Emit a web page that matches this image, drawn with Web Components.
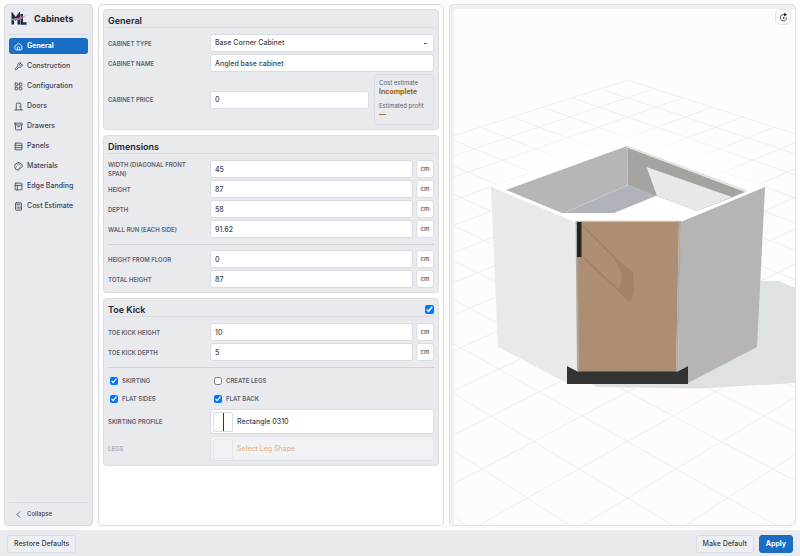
<!DOCTYPE html>
<html lang="en">
<head>
<meta charset="utf-8">
<meta name="viewport" content="width=device-width, initial-scale=1">
<title>Cabinets</title>
<style>
  :root {
    --surface: #e8eaee;
    --line: #d9dce2;
    --ink: #1d2430;
    --text: #3c4452;
    --muted: #5b6371;
    --accent: #196dc5;
    --field: #ffffff;
  }
  html, body { height: 100%; }
  body { margin: 0; background: #fdfdfe; color: var(--text); font: 500 7px/10px Inter, "Liberation Sans", sans-serif; }
</style>
</head>
<body>
<cabinet-app></cabinet-app>

<script>
const define = (name, css, html, setup) => {
  const template = document.createElement('template');
  template.innerHTML = `<style>*{box-sizing:border-box}[hidden]{display:none!important}${css}</style>${html}`;
  customElements.define(name, class extends HTMLElement {
    connectedCallback() {
      if (this.shadowRoot) return;
      const root = this.attachShadow({ mode: 'open' });
      root.append(template.content.cloneNode(true));
      if (setup) setup(this, root);
    }
  });
};

const ICONS = {
  home: '<path d="M3 10.5 12 3l9 7.5V19a2 2 0 0 1-2 2H5a2 2 0 0 1-2-2z"/><path d="M9 21v-7a1 1 0 0 1 1-1h4a1 1 0 0 1 1 1v7"/>',
  wrench: '<path d="M14.7 6.3a1 1 0 0 0 0 1.4l1.600 1.600a1 1 0 0 0 1.400 0l3.770-3.770a6 6 0 0 1-7.940 7.940l-6.910 6.910a2.120 2.120 0 0 1-3-3l6.910-6.910a6 6 0 0 1 7.940-7.940z"/>',
  grid: '<rect x="3" y="3" width="7" height="7" rx="1"/><rect x="14" y="3" width="7" height="7" rx="1"/><rect x="14" y="14" width="7" height="7" rx="1"/><rect x="3" y="14" width="7" height="7" rx="1"/>',
  door: '<path d="M6 21V5a2 2 0 0 1 2-2h8a2 2 0 0 1 2 2v16"/><path d="M2 21h20M14.5 12v.5"/>',
  archive: '<rect x="2" y="3" width="20" height="5" rx="1"/><path d="M4 8v11a2 2 0 0 0 2 2h12a2 2 0 0 0 2-2V8M9.5 12.5h5"/>',
  rows: '<rect x="3" y="3" width="18" height="18" rx="2"/><path d="M3 9h18M3 15h18"/>',
  palette: '<path d="M12 2a10 10 0 0 0 0 20c1 0 1.700-.8 1.700-1.700 0-.4-.2-.8-.4-1.100-.3-.3-.5-.7-.5-1.100a1.600 1.600 0 0 1 1.700-1.700h2c3 0 5.500-2.500 5.500-5.500C22 6 17.500 2 12 2z"/><path d="M13.5 6.5h.1M17.3 10.5h.1M8.5 7.5h.1M6.5 12.5h.1"/>',
  layout: '<rect x="3" y="3" width="18" height="18" rx="2"/><path d="M3 9h18M9 21V9"/>',
  calc: '<rect x="4" y="2" width="16" height="20" rx="2"/><path d="M8 6h8M16 14v4M8 10.5h.1M12 10.5h.1M16 10.5h.1M8 14.5h.1M12 14.5h.1M8 18h.1M12 18h.1"/>',
  left: '<path d="m15 5-7 7 7 7"/>',
  rotate: '<path d="M20.500 13a8.500 8.500 0 1 1-5-8.300"/><path d="M14.500 1.500v6.500l5-3.300z" fill="currentColor"/><circle cx="12" cy="13" r="1.200" fill="currentColor"/>'
};

define('ui-icon',
  `:host{display:block;width:9px;height:9px;flex:none}
   svg{display:block;width:100%;height:100%;fill:none;stroke:currentColor;stroke-width:2.2;stroke-linecap:round;stroke-linejoin:round}`,
  `<svg viewBox="0 0 24 24" aria-hidden="true"></svg>`,
  (host, root) => { root.querySelector('svg').innerHTML = ICONS[host.getAttribute('name')]; });

define('brand-logo',
  `:host{display:block;width:17px;height:14px;flex:none} svg{display:block;width:100%;height:100%}`,
  `<svg viewBox="0 0 34 28" role="img" aria-label="Logo">
    <g fill="none" stroke="#1c2a4d" stroke-width="5">
      <path d="M5.500 25V6l6 8 6-8v19"/><path d="M23.500 4v19H33"/>
    </g>
    <path d="M0 14C10 15 21 12 33 6 25 14 13 19 0 14z" fill="#e0364c" stroke="#e8eaee" stroke-width=".8"/>
  </svg>`);

define('nav-item',
  `:host{display:block}
   a{display:flex;align-items:center;gap:4px;height:16px;padding:0 5px;border-radius:3px;color:inherit;text-decoration:none;white-space:nowrap}
   a[aria-current]{background:var(--accent);color:#fff;font-weight:700}`,
  `<a href="#"><slot></slot></a>`,
  (host, root) => {
    const link = root.querySelector('a');
    const icon = document.createElement('ui-icon');
    icon.setAttribute('name', host.getAttribute('icon'));
    link.prepend(icon);
    if (host.hasAttribute('current')) link.setAttribute('aria-current', 'page');
  });

define('side-nav',
  `:host{display:flex;flex-direction:column;background:var(--surface);border:1px solid var(--line);border-radius:4px;padding:4px 4px 0}
   header{display:flex;align-items:center;gap:7px;height:26px;padding:0 1px 5px;border-bottom:1px solid var(--line);color:var(--ink)}
   h1{margin:0;font-size:9px;line-height:12px;font-weight:700}
   nav{display:flex;flex-direction:column;gap:4px;padding-top:3px;flex:1}
   button{display:flex;align-items:center;gap:4px;height:23px;padding:0 5px;border:0;border-top:1px solid var(--line);background:none;color:inherit;font:inherit;font-size:6px;text-align:left}`,
  `<header><brand-logo></brand-logo><h1>Cabinets</h1></header>
   <nav aria-label="Sections"><slot></slot></nav>
   <button type="button"><ui-icon name="left"></ui-icon>Collapse</button>`);

define('panel-card',
  `:host{display:block;background:var(--surface);border:1px solid var(--line);border-radius:4px;padding:4px}
   header{display:flex;align-items:center;justify-content:space-between;height:14px;border-bottom:1px solid var(--line);margin-bottom:6px}
   h2{margin:0;font-size:9px;line-height:12px;font-weight:600;color:var(--ink)}
   input{width:9px;height:9px;margin:0;accent-color:#0075ff}
   .body{display:grid;gap:2px}`,
  `<header><h2></h2><input type="checkbox" checked hidden></header><div class="body"><slot></slot></div>`,
  (host, root) => {
    root.querySelector('h2').textContent = host.getAttribute('heading');
    const box = root.querySelector('input');
    box.hidden = !host.hasAttribute('toggle');
    box.setAttribute('aria-label', 'Enable ' + host.getAttribute('heading'));
  });

define('rule-line', `:host{display:block;height:1px;margin:4px 0 3px;background:#cfd3da}`, ``);

const ROW_CSS = `
   :host{display:grid;grid-template-columns:98px minmax(0,1fr);gap:4px;align-items:center}
   label,.label{padding-right:6px;font-size:6px;line-height:9px;font-weight:600;text-transform:uppercase;color:var(--muted)}
   .control{display:flex;gap:3px;min-width:0}
   input,select,.unit{height:18px;border:1px solid var(--line);border-radius:3px;background-color:var(--field);color:var(--text);font:inherit;margin:0}
   input,select{flex:1;min-width:0;width:100%;padding:0 4px}`;

define('text-row',
  ROW_CSS + `.unit{width:18px;padding:0;flex:none;font-size:6px;font-weight:600;color:var(--muted);text-align:center}`,
  `<label for="field"></label>
   <div class="control"><input id="field" type="text"><button class="unit" type="button" hidden></button></div>`,
  (host, root) => {
    root.querySelector('label').textContent = host.getAttribute('label');
    root.querySelector('input').value = host.getAttribute('value');
    const unit = root.querySelector('button');
    unit.hidden = !host.hasAttribute('unit');
    unit.textContent = host.getAttribute('unit') || '';
  });

define('select-row',
  ROW_CSS + `select{appearance:none;background-image:linear-gradient(var(--muted),var(--muted));background-size:3px 1px;background-position:right 6px center;background-repeat:no-repeat}`,
  `<label for="field"></label><div class="control"><select id="field"><option></option></select></div>`,
  (host, root) => {
    root.querySelector('label').textContent = host.getAttribute('label');
    root.querySelector('option').textContent = host.getAttribute('value');
  });

define('price-row',
  ROW_CSS + `.control{align-items:center;gap:5px}`,
  `<label for="field"></label><div class="control"><input id="field" type="text"><slot></slot></div>`,
  (host, root) => {
    root.querySelector('label').textContent = host.getAttribute('label');
    root.querySelector('input').value = host.getAttribute('value');
  });

define('cost-summary',
  `:host{display:block;box-sizing:border-box;width:60px;flex:none;border:1px solid var(--line);border-radius:3px;padding:3px 4px 4px}
   dl{margin:0} dt{font-size:6px;line-height:9px;font-weight:400;color:var(--muted);white-space:nowrap}
   dd{margin:0;line-height:10px;font-weight:700;color:#946512}
   dd + dt{margin-top:4px}`,
  `<dl><dt>Cost estimate</dt><dd>Incomplete</dd><dt>Estimated profit</dt><dd>—</dd></dl>`);

define('check-pair',
  `:host{display:grid;grid-template-columns:98px minmax(0,1fr);gap:6px;padding-left:2px}`,
  `<slot></slot>`);

define('check-box',
  `:host{display:block}
   label{display:flex;align-items:center;gap:4px;height:16px;font-size:6px;font-weight:600;text-transform:uppercase;color:var(--muted)}
   input{width:8px;height:8px;margin:0;accent-color:#0075ff}`,
  `<label><input type="checkbox"><slot></slot></label>`,
  (host, root) => { root.querySelector('input').checked = host.hasAttribute('checked'); });

define('picker-row',
  ROW_CSS + `
   button{display:flex;align-items:center;gap:4px;width:100%;height:25px;padding:0 2px;border:1px solid var(--line);border-radius:3px;background:var(--field);color:var(--text);font:inherit;text-align:left}
   .thumb{display:flex;justify-content:center;align-items:center;width:20px;height:20px;border:1px solid var(--line);border-radius:2px}
   .thumb i{width:1px;height:18px;background:#333}
   :host([disabled]) .label{color:#a9adb5}
   :host([disabled]) button{background:#f0f2f5;border-color:#e1e4e9;color:#e3ba8c}
   :host([disabled]) .thumb{border-color:#e4e7eb}
   :host([disabled]) i{display:none}`,
  `<span class="label" id="name"></span>
   <button type="button" aria-labelledby="name value"><span class="thumb"><i></i></span><span id="value"></span></button>`,
  (host, root) => {
    root.querySelector('#name').textContent = host.getAttribute('label');
    root.querySelector('#value').textContent = host.getAttribute('value');
    root.querySelector('button').disabled = host.hasAttribute('disabled');
  });

define('scene-view',
  `:host{display:block;position:relative;overflow:hidden;background:#eff0f1;border:1px solid #dfe2e6;border-radius:4px;padding:4px 0 0 4px}
   svg.scene{display:block;width:100%;height:100%;background:#fcfcfc}
   button{position:absolute;top:4px;right:4px;display:grid;place-items:center;width:16px;height:16px;padding:0;border:1px solid #e0e2e6;border-radius:6px;background:#fff;color:#22262c}`,
  `<svg class="scene" viewBox="454 9 341 516" preserveAspectRatio="xMidYMid slice" role="img" aria-label="Cabinet preview">
     <defs>
       <radialGradient id="glow"><stop offset=".6" stop-color="#fefefe"/><stop offset="1" stop-color="#fefefe" stop-opacity="0"/></radialGradient>
       <linearGradient id="wood" x1="0" y1="0" x2="0" y2="1"><stop offset="0" stop-color="#ae8f76"/><stop offset="1" stop-color="#ae8d70"/></linearGradient>
       <filter id="grain" x="0" y="0" width="1" height="1">
         <feTurbulence type="fractalNoise" baseFrequency=".02 .3" numOctaves="3" seed="4"/>
         <feColorMatrix values="0 0 0 0 .4  0 0 0 0 .28  0 0 0 0 .2  .4 0 0 0 -.12"/>
         <feComposite in2="SourceGraphic" operator="in"/>
       </filter>
       <filter id="soft"><feGaussianBlur stdDeviation=".6"/></filter>
     </defs>
     <g id="floor" fill="none" stroke="#efeff0" stroke-width="1"></g>
     <ellipse cx="628" cy="192" rx="140" ry="74" fill="url(#glow)"/>
     <path d="M757 281h22l16 7v95l-95 5.500-103-1.500-8-4 90-6z" fill="#dfe2e2"/>
     <path d="M491 186 627 145 765 186 680 223H576z" fill="#fff"/>
     <path d="M627 146 506 190l56 23h6l60-28z" fill="#b6b6b6"/>
     <path d="M628 185 562 213h52l43-17.500z" fill="#b0b3b9"/>
     <path d="M628 185 566 212" stroke="#d2d4d6" stroke-width=".7"/>
     <path d="m627 147 118 45-12 5-36 14-40-15-29-11z" fill="#a5a3a0"/>
     <path d="m646.500 167 10.500 29 40 15 35-14z" fill="#e8e8e8"/>
     <path d="M627 146.500 746 191" stroke="#e4e2e0" stroke-width="2" fill="none"/>
     <path d="M627.500 148v37" stroke="#c3c3c2" stroke-width=".7"/>
     <path d="m491 187 84.500 35 2.500 149-11-5v17l-69-36z" fill="#e9e9e9"/>
     <path d="m765 187-84.500 35-2.500 149 10-5v17l69-36z" fill="#b5b5b5"/>
     <path d="M575.500 221h2l2 151-2.500-1z" fill="#a9abac"/>
     <path d="M679 221h2l-3 150-2 1z" fill="#a9abac"/>
     <path d="M577 221h102l-3 151h-97z" fill="url(#wood)"/>
     <path d="M577 221h102l-3 151h-97z" filter="url(#grain)"/>
     <path d="M577 221.300h102" stroke="#dcb796" stroke-width="1.200"/>
     <g filter="url(#soft)" opacity=".2">
       <path d="m583 226 33 33M584 258l46 43" fill="none" stroke="#6f5846" stroke-width="2"/>
       <path d="m614 257 19 15 1 18-3 12-12-13 3-14z" fill="#6f5846"/>
     </g>
     <path d="M577 222h4.500v35H577z" fill="#24221d"/>
     <path d="m567 366 10.500 5.500h100L688 366v18H567z" fill="#333"/>
   </svg>
   <button type="button" aria-label="Reset view"><ui-icon name="rotate"></ui-icon></button>`,
  (host, root) => {
    // Ground grid in one-point perspective: s is depth along the view axis, d the sideways offset.
    const point = (u, v) => {
      const s = u + v, d = u - v, h = 1 / (0.0012255 - 0.0000373 * s);
      return `${(627.5 + d * h * 0.05576).toFixed(1)} ${(h - 400).toFixed(1)}`;
    };
    let d = '';
    for (let k = -11.5; k <= 8.5; k++) {
      d += `M${point(k, -11.5)}L${point(k, 8.5)}M${point(-11.5, k)}L${point(8.5, k)}`;
    }
    const path = document.createElementNS('http://www.w3.org/2000/svg', 'path');
    path.setAttribute('d', d);
    root.querySelector('#floor').append(path);
  });

define('ui-button',
  `:host{display:block}
   button{display:block;height:18px;padding:0 6px;border:1px solid var(--line);border-radius:3px;background:#eceef1;color:inherit;font:inherit;white-space:nowrap}
   :host([primary]) button{background:var(--accent);border-color:var(--accent);color:#fff;font-weight:700}`,
  `<button type="button"><slot></slot></button>`);

define('action-bar',
  `:host{display:flex;align-items:center;gap:5px;height:27px;padding:0 7px;background:var(--surface)}
   ::slotted(:first-child){margin-right:auto}`,
  `<slot></slot>`);

define('cabinet-app',
  `:host{display:flex;flex-direction:column;min-height:100vh}
   main{flex:1;display:grid;grid-template-columns:89px minmax(0,346fr) minmax(0,347fr);gap:5px;padding:4px}
   .form{display:flex;flex-direction:column;gap:5px;padding:4px;background:#fff;border:1px solid var(--line);border-radius:4px}`,
  `<main>
     <side-nav>
       <nav-item icon="home" current>General</nav-item>
       <nav-item icon="wrench">Construction</nav-item>
       <nav-item icon="grid">Configuration</nav-item>
       <nav-item icon="door">Doors</nav-item>
       <nav-item icon="archive">Drawers</nav-item>
       <nav-item icon="rows">Panels</nav-item>
       <nav-item icon="palette">Materials</nav-item>
       <nav-item icon="layout">Edge Banding</nav-item>
       <nav-item icon="calc">Cost Estimate</nav-item>
     </side-nav>
     <section class="form">
       <panel-card heading="General">
         <select-row label="Cabinet type" value="Base Corner Cabinet"></select-row>
         <text-row label="Cabinet name" value="Angled base cabinet"></text-row>
         <price-row label="Cabinet price" value="0"><cost-summary></cost-summary></price-row>
       </panel-card>
       <panel-card heading="Dimensions">
         <text-row label="Width (diagonal front span)" value="45" unit="cm"></text-row>
         <text-row label="Height" value="87" unit="cm"></text-row>
         <text-row label="Depth" value="58" unit="cm"></text-row>
         <text-row label="Wall run (each side)" value="91.62" unit="cm"></text-row>
         <rule-line></rule-line>
         <text-row label="Height from floor" value="0" unit="cm"></text-row>
         <text-row label="Total height" value="87" unit="cm"></text-row>
       </panel-card>
       <panel-card heading="Toe Kick" toggle>
         <text-row label="Toe kick height" value="10" unit="cm"></text-row>
         <text-row label="Toe kick depth" value="5" unit="cm"></text-row>
         <rule-line></rule-line>
         <check-pair><check-box checked>Skirting</check-box><check-box>Create legs</check-box></check-pair>
         <check-pair><check-box checked>Flat sides</check-box><check-box checked>Flat back</check-box></check-pair>
         <picker-row label="Skirting profile" value="Rectangle 0310"></picker-row>
         <picker-row label="Legs" value="Select Leg Shape" disabled></picker-row>
       </panel-card>
     </section>
     <scene-view></scene-view>
   </main>
   <action-bar><ui-button>Restore Defaults</ui-button><ui-button>Make Default</ui-button><ui-button primary>Apply</ui-button></action-bar>`);
</script>
</body>
</html>
